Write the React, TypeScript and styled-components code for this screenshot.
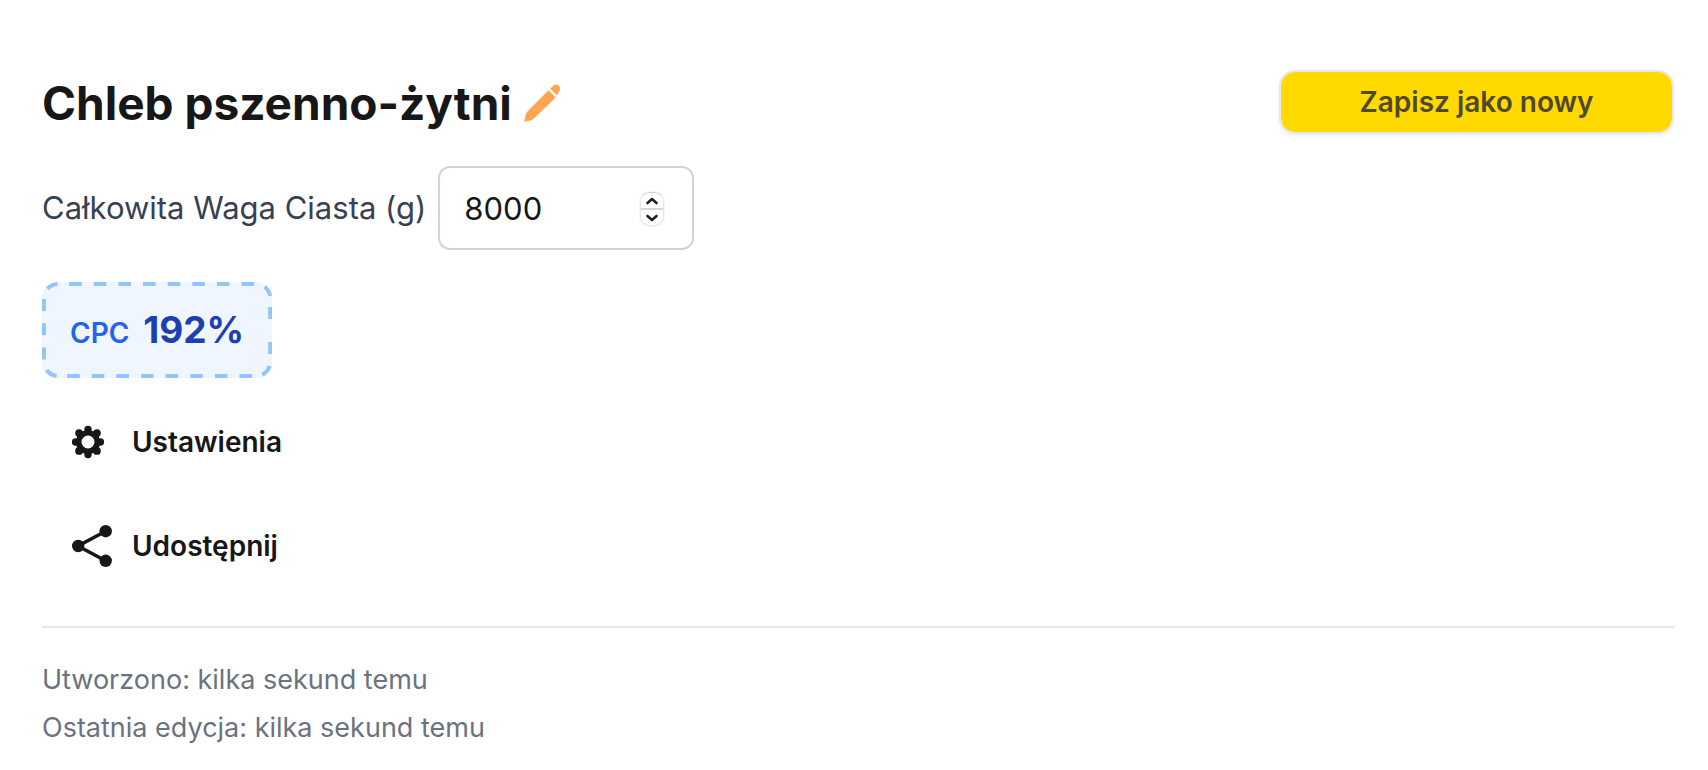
import React, { useState } from "react";
import styled, { createGlobalStyle } from "styled-components";

const GlobalStyle = createGlobalStyle`
  *, *::before, *::after { box-sizing: border-box; }
  body {
    margin: 0;
    background: #ffffff;
    color: #171717;
    font-family: Inter, "Liberation Sans", sans-serif;
    -webkit-font-smoothing: antialiased;
  }
  button, input { font: inherit; color: inherit; }
  svg { display: block; }
`;

const Page = styled.main`
  display: flex;
  flex-direction: column;
  padding: 70px 34px 18px 42px;
`;

const Header = styled.header`
  display: flex;
  align-items: flex-start;
  justify-content: space-between;
  gap: 32px;
`;

const TitleRow = styled.div`
  display: flex;
  align-items: center;
  gap: 12px;
`;

const Title = styled.h1`
  margin: 0;
  font-size: 46px;
  line-height: 66px;
  font-weight: 700;
`;

const IconButton = styled.button`
  padding: 0;
  border: 0;
  background: none;
  cursor: pointer;
`;

const SaveButton = styled.button`
  flex: 0 1 395px;
  height: 64px;
  border: 2px solid #e5e7eb;
  border-radius: 16px;
  background: #ffd900;
  background-clip: padding-box;
  box-shadow: 0 2px 4px rgba(0, 0, 0, 0.06);
  color: #4f4829;
  font-size: 28px;
  line-height: 40px;
  font-weight: 600;
  cursor: pointer;
`;

const WeightRow = styled.div`
  display: flex;
  align-items: center;
  gap: 12px;
  margin-top: 30px;
`;

const WeightLabel = styled.label`
  color: #374151;
  font-size: 31px;
  line-height: 48px;
`;

const WeightField = styled.div`
  display: flex;
  align-items: center;
  width: 256px;
  height: 84px;
  padding: 2px 28px 0 24px;
  border: 2px solid #d1d5db;
  border-radius: 12px;
`;

const WeightInput = styled.input`
  flex: 1;
  min-width: 0;
  padding: 0;
  border: 0;
  outline: 0;
  background: none;
  font-size: 31px;
  line-height: 48px;
  appearance: textfield;
  &::-webkit-inner-spin-button { appearance: none; margin: 0; }
`;

const Stepper = styled.div`
  display: flex;
  flex-direction: column;
  width: 24px;
  height: 34px;
  border: 1px solid #e6e6e6;
  border-top-color: #cccccc;
  border-radius: 10px;
  box-shadow: 0 0 2px rgba(0, 0, 0, 0.16);
  overflow: hidden;
`;

const StepButton = styled.button`
  display: flex;
  flex: 1;
  align-items: center;
  justify-content: center;
  padding: 0;
  border: 0;
  background: #ffffff;
  & + & { border-top: 2px solid #d6d6d6; }
`;

const Cpc = styled.div`
  position: relative;
  display: flex;
  align-self: flex-start;
  align-items: baseline;
  gap: 14px;
  margin-top: 32px;
  padding: 24px 28px;
  border-radius: 16px;
  background: #eff6ff;
`;

const DashedOutline = styled.svg`
  position: absolute;
  inset: 0;
  width: 100%;
  height: 100%;
`;

const CpcName = styled.span`
  color: #2563eb;
  font-size: 28px;
  line-height: 40px;
  font-weight: 600;
`;

const CpcValue = styled.span`
  color: #1e40af;
  font-size: 37px;
  line-height: 48px;
  font-weight: 700;
`;

const Actions = styled.div`
  display: flex;
  flex-direction: column;
  align-items: flex-start;
  gap: 24px;
  margin-top: 24px;
`;

const ActionButton = styled.button`
  display: flex;
  align-items: center;
  height: 80px;
  padding: 0 28px 0 30px;
  border: 0;
  background: none;
  font-size: 28px;
  line-height: 40px;
  font-weight: 600;
  cursor: pointer;
`;

const ActionIcon = styled.span`
  width: 60px;
`;

const Meta = styled.footer`
  display: flex;
  flex-direction: column;
  gap: 8px;
  margin-top: 40px;
  padding-top: 32px;
  border-top: 2px solid #e5e7eb;
  color: #6b7280;
  font-size: 27px;
  line-height: 40px;
`;

const MetaLine = styled.p`
  margin: 0;
`;

const PencilIcon = () => (
  <svg width="36" height="38" viewBox="0 0 36 38" fill="#ffa552" aria-hidden="true">
    <path d="M24.5 6.2 31.6 13.4 10.4 34Q8.6 35.6 6.2 36.4L1.8 37.6Q0 38 .5 36.2L1.5 31.6Q2.1 28.8 3.9 26.9Z" />
    <path d="M26.2 4.6 28.7 2.1Q32-1 34.8 1.8 37.4 4.8 34.8 8.2L33 11.6Z" />
  </svg>
);

const GearIcon = () => (
  <svg width="34" height="34" viewBox="0 0 34 34" aria-hidden="true">
    <g fill="#171717">
      <circle cx="16" cy="4.4" r="3.7" />
      <circle cx="16" cy="29.6" r="3.7" />
      <circle cx="3.6" cy="17" r="3.7" />
      <circle cx="28.4" cy="17" r="3.7" />
      <circle cx="7.1" cy="8.1" r="3.9" />
      <circle cx="24.9" cy="8.1" r="3.9" />
      <circle cx="7.1" cy="25.9" r="3.9" />
      <circle cx="24.9" cy="25.9" r="3.9" />
    </g>
    <circle cx="16" cy="17" r="9.3" fill="none" stroke="#171717" strokeWidth="5.6" />
  </svg>
);

const ShareIcon = () => (
  <svg width="40" height="42" viewBox="0 0 40 42" fill="#171717" aria-hidden="true">
    <path d="M34 6 6 21 34 36" fill="none" stroke="#171717" strokeWidth="3.6" />
    <circle cx="6.2" cy="21" r="6.2" />
    <circle cx="33.7" cy="6.2" r="6.2" />
    <circle cx="33.7" cy="35.8" r="6.2" />
  </svg>
);

const Chevron = ({ d }: { d: string }) => (
  <svg width="12" height="8" viewBox="0 0 12 8" fill="none" stroke="#222222" strokeWidth="2.6" strokeLinecap="round" strokeLinejoin="round" aria-hidden="true">
    <path d={d} />
  </svg>
);

export default function App() {
  const [weight, setWeight] = useState(8000);
  return (
    <>
      <GlobalStyle />
      <Page>
        <Header>
          <TitleRow>
            <Title>Chleb pszenno-żytni</Title>
            <IconButton type="button" aria-label="Edytuj nazwę">
              <PencilIcon />
            </IconButton>
          </TitleRow>
          <SaveButton type="button">Zapisz jako nowy</SaveButton>
        </Header>
        <WeightRow>
          <WeightLabel htmlFor="weight">Całkowita Waga Ciasta (g)</WeightLabel>
          <WeightField>
            <WeightInput id="weight" type="number" value={weight} onChange={(e) => setWeight(Number(e.target.value))} />
            <Stepper>
              <StepButton type="button" aria-label="Zwiększ" onClick={() => setWeight(weight + 1)}>
                <Chevron d="M1.5 6 6 2 10.5 6" />
              </StepButton>
              <StepButton type="button" aria-label="Zmniejsz" onClick={() => setWeight(weight - 1)}>
                <Chevron d="M1.5 2 6 6 10.5 2" />
              </StepButton>
            </Stepper>
          </WeightField>
        </WeightRow>
        <Cpc>
          <DashedOutline viewBox="0 0 229 96" preserveAspectRatio="none" fill="none" stroke="#93c5fd" strokeWidth="4" aria-hidden="true">
            <path d="M27 2H212" strokeDasharray="12.5 12" />
            <path d="M25 94H210" strokeDasharray="12.5 12" />
            <path d="M2 17V78" strokeDasharray="12 12.3" />
            <path d="M227 25V37M227 60V72" />
            <path d="M5.4 6.9A14 14 0 0 1 15.5 2M221.5 4.9A14 14 0 0 1 226.9 14M226.5 84A14 14 0 0 1 219 92.7M14.5 94A14 14 0 0 1 4.6 88" />
          </DashedOutline>
          <CpcName>CPC</CpcName>
          <CpcValue>192%</CpcValue>
        </Cpc>
        <Actions>
          <ActionButton type="button">
            <ActionIcon><GearIcon /></ActionIcon>
            Ustawienia
          </ActionButton>
          <ActionButton type="button">
            <ActionIcon><ShareIcon /></ActionIcon>
            Udostępnij
          </ActionButton>
        </Actions>
        <Meta>
          <MetaLine>Utworzono: kilka sekund temu</MetaLine>
          <MetaLine>Ostatnia edycja: kilka sekund temu</MetaLine>
        </Meta>
      </Page>
    </>
  );
}
